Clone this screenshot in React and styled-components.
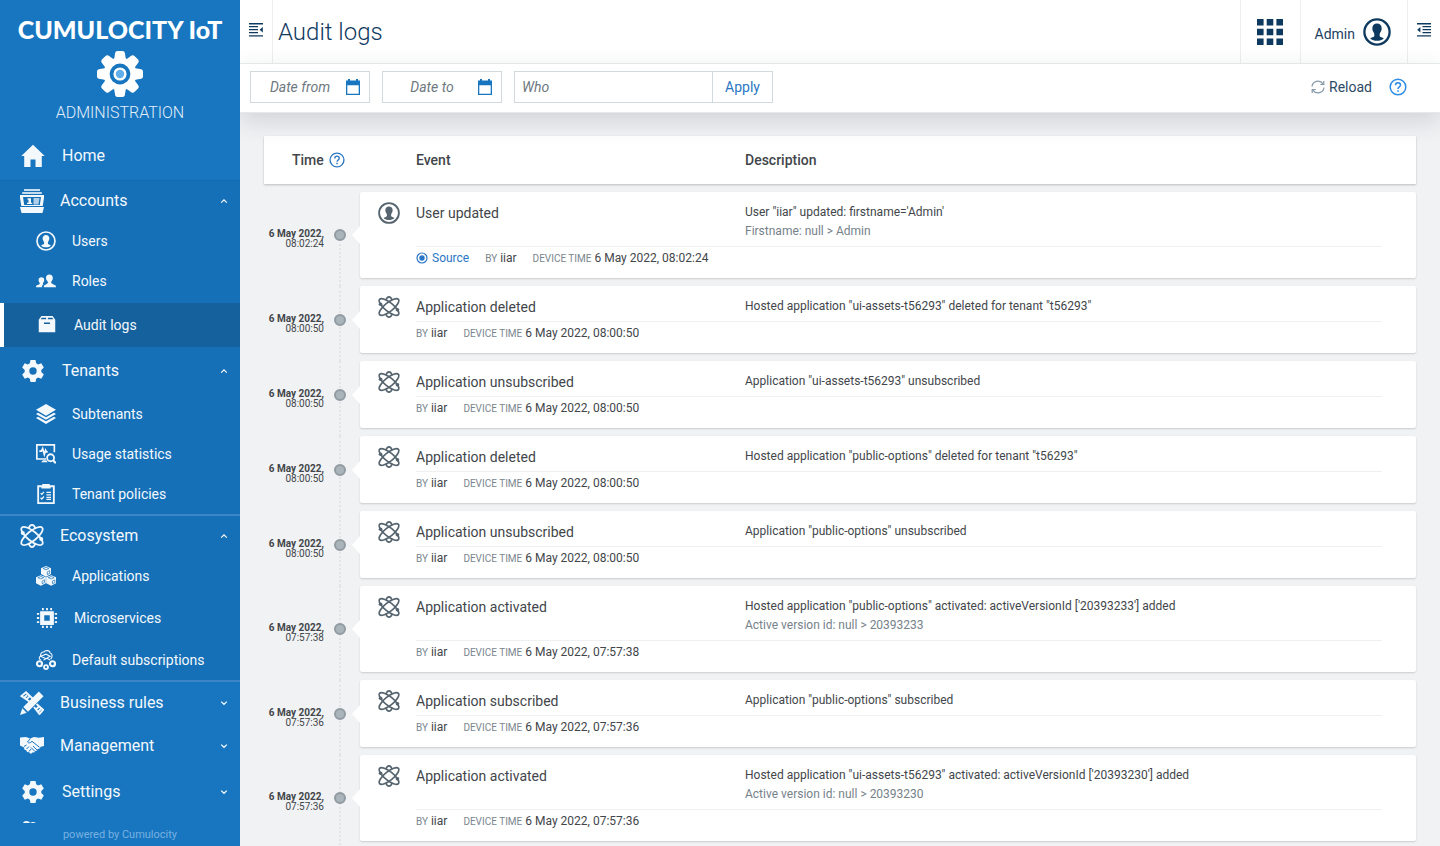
import React from "react";
import styled, { createGlobalStyle } from "styled-components";

const GlobalStyle = createGlobalStyle`
  *, *::before, *::after { box-sizing: border-box; }
  body {
    margin: 0;
    background: #f1f2f4;
    color: #42464a;
    font-family: Roboto, "Liberation Sans", sans-serif;
    font-size: 14px;
    line-height: 20px;
  }
  button, input { font: inherit; color: inherit; }
  button { background: none; border: 0; padding: 0; cursor: pointer; }
  a { color: inherit; text-decoration: none; }
  ul { list-style: none; margin: 0; padding: 0; }
  svg { display: block; flex: none; }
`;

/* ---------- icons ---------- */

const Svg = ({ size = 24, box = 24, children }) => (
  <svg width={size} height={size} viewBox={`0 0 ${box} ${box}`} fill="currentColor" aria-hidden="true">
    {children}
  </svg>
);

const LogoGear = () => (
  <svg width="46" height="46" viewBox="-23 -23 46 46" aria-hidden="true">
    <g fill="#fff">
      {[0, 45, 90, 135].map((a) => (
        <path
          key={a}
          transform={`rotate(${a})`}
          d="M-4.8-21.2Q-4.5-23-2.6-23H2.6Q4.5-23 4.8-21.2L6-14V14L4.8 21.2Q4.5 23 2.6 23H-2.6Q-4.5 23-4.8 21.2L-6 14V-14z"
        />
      ))}
      <circle r="16.5" />
    </g>
    <circle r="10.4" fill="#1776bf" />
    <circle r="6.6" fill="#fff" />
    <circle r="4.2" fill="#62aeea" />
  </svg>
);

const HomeIcon = () => (
  <Svg>
    <path d="M12 .8.3 12h2.9v11h6.3v-7.500h5V23h6.300V12h2.900z" />
  </Svg>
);

const AccountsIcon = () => (
  <Svg>
    <path opacity=".8" d="M4 0h16v2H4zM2.200 3h19.600v2H2.200z" />
    <path fillRule="evenodd" d="M0 6h24v3l-1.300 8H1.300L0 9zm3 2 1.200 8h15.600L21 8z" />
    <path d="M7.500 9.300H11v4.500h1.200V15H7v-1.200h1.500v-3h-1z" />
    <path opacity=".7" d="M13.500 9h6l-1 6.500h-5z" />
    <path d="M0 18h24l-1.500 6h-21z" />
  </Svg>
);

const UserCircleIcon = ({ size }) => (
  <Svg size={size}>
    <circle cx="12" cy="12" r="10.800" fill="none" stroke="currentColor" strokeWidth="2" />
    <path d="M12 4.800c2.400 0 4 1.600 4 4 0 1.400-.3 2.200-.8 3-.5.900-.9 1.400-.9 2.300v1.300c0 .9 2.600 1.100 3.600 2.200-1.600 1.300-3.600 2-5.900 2s-4.300-.7-5.900-2c1-1.100 3.600-1.300 3.600-2.200v-1.300c0-.9-.4-1.400-.9-2.300-.5-.8-.8-1.600-.8-3 0-2.400 1.600-4 4-4z" />
  </Svg>
);

const RolesIcon = () => (
  <Svg size={20}>
    <path d="M16 4.200c2.600 0 4.200 1.600 4.200 4.200 0 2-1 3.200-1.700 4.300-.6 1-.2 2.200.9 2.700l3 1.300c1.100.5 1.600 1.300 1.600 2.800H9.300c0-1.500.4-2.300 1.500-2.800l2.500-1.300c1.100-.5 1.300-1.700.7-2.700-.8-1.100-2-2.300-2-4.300 0-2.600 1.600-4.200 4-4.200z" />
    <path d="M6.500 7.500c2.100 0 3.400 1.300 3.400 3.300 0 1.700-.8 2.500-1.300 3.300-.5.900-.3 1.500.4 1.900-1.300.8-1.900 1.800-2 3.500H0c0-1.200.3-1.900 1.200-2.300l2.300-1c.9-.4 1.300-1.200.8-2.100-.5-.8-1.200-1.600-1.200-3.300 0-2 1.300-3.300 3.400-3.300z" />
  </Svg>
);

const ArchiveIcon = () => (
  <Svg size={18}>
    <path fillRule="evenodd" d="M4.500 0h15L23 5v16.500H1V5zM5 2.200 3.600 4.300h7.200V2.200zm8.200 0v2.100h7.200L19 2.200zM8 8.500v2.200h8V8.500z" />
  </Svg>
);

const CogIcon = () => (
  <Svg>
    <path
      fillRule="evenodd"
      d="M9.500 1h5l.7 3.300 1.900 1.100 3.200-1.100 2.500 4.300-2.500 2.300v2.200l2.500 2.300-2.500 4.300-3.200-1.100-1.900 1.100-.7 3.300h-5l-.7-3.300-1.900-1.100-3.200 1.100-2.500-4.300 2.500-2.300v-2.200L1.200 8.600l2.500-4.300 3.200 1.100 1.900-1.100zM12 8.300a3.700 3.700 0 1 0 0 7.400 3.700 3.700 0 0 0 0-7.400z"
    />
  </Svg>
);

const LayersIcon = () => (
  <Svg size={20}>
    <path d="M12 0 24 7 12 14 0 7zM2.500 10.600 12 16l9.500-5.400L24 12l-12 7L0 12zM2.500 15.400 12 20.800l9.500-5.400L24 16.800 12 24 0 16.800z" />
  </Svg>
);

const StatisticsIcon = () => (
  <Svg size={20}>
    <g fill="none" stroke="currentColor">
      <path strokeWidth="2" d="M12 18H1V1h21v9M4 8.500h2.500l1.500-3 2 7 1.500-5 1 2H14" />
      <circle cx="17.500" cy="16.500" r="4.200" strokeWidth="2.200" />
      <path strokeWidth="2.600" d="m20.500 19.500 3.300 3.500" />
    </g>
    <path d="M8.500 19.500h4L14 22H6z" />
  </Svg>
);

const ClipboardIcon = () => (
  <Svg size={20}>
    <path fillRule="evenodd" d="M1.500 1.500h6V0h9v1.500h6V24h-21zm2.200 2.500v17.800h16.600V4h-2.800v1.500h-11V4z" />
    <path
      fill="none"
      stroke="currentColor"
      strokeWidth="1.500"
      d="m5.500 11 1.500 1.500L9.500 9.500m-4 7L7 18l2.500-3M12.500 10H18m-5.500 3H18m-5.500 3H18m-5.500 2.500H18"
    />
  </Svg>
);

const AtomIcon = ({ size }) => (
  <Svg size={size}>
    <g fill="none" stroke="currentColor" strokeWidth="1.800">
      <ellipse cx="12" cy="12" rx="13.200" ry="4.800" transform="rotate(-39 12 12)" />
      <ellipse cx="12" cy="12" rx="13.200" ry="4.800" transform="rotate(39 12 12)" />
      <path d="M8.700 4.400C9.400 2 10.600.9 12 .9s2.600 1.100 3.300 3.500M8.700 19.600c.7 2.400 1.900 3.500 3.300 3.500s2.600-1.100 3.300-3.500" />
    </g>
    <circle cx="2.800" cy="9" r="2" />
    <circle cx="21.200" cy="15" r="2" />
  </Svg>
);

const Cube = ({ x, y }) => (
  <g transform={`translate(${x} ${y})`}>
    <path d="M6 0 12 2.600v7L6 12.800 0 9.600v-7z" />
    <path fill="none" stroke="#1670b7" strokeWidth=".8" d="M2.500 3 6 4.500 9.500 3 6 1.600zM7.600 7v3.300l2.800-1.500V5.600z" />
  </g>
);

const CubesIcon = () => (
  <Svg size={20}>
    <Cube x={6} y={0} />
    <Cube x={-0.2} y={11} />
    <Cube x={12.2} y={11} />
  </Svg>
);

const ChipIcon = () => (
  <Svg size={22}>
    <path fillRule="evenodd" d="M4.500 4.500h15v15h-15zM9 9v6h6V9z" />
    <path d="M6.500 1h2v2.500h-2zm4.500 0h2v2.500h-2zm4.500 0h2v2.500h-2zm-9 19.500h2V23h-2zm4.500 0h2V23h-2zm4.500 0h2V23h-2zM1 6.500h2.500v2H1zM1 11h2.500v2H1zm0 4.500h2.500v2H1zm19.500-9H23v2h-2.500zm0 4.500H23v2h-2.500zm0 4.500H23v2h-2.500z" />
  </Svg>
);

const SubscriptionsIcon = () => (
  <Svg size={20}>
    <g fill="none" stroke="currentColor">
      <path strokeWidth="1.300" d="M6 12C3.500 11.500 3 8.500 5.500 7.500 5 4.500 7 2 9.500 2.500c1-2.500 7-2.500 7.500 1 3 .5 3 5 .5 7.500M5.500 7.500 12 5l5 2.500-5 3zM9 12l4-2 4 2" />
      <circle cx="4.200" cy="16.500" r="3" strokeWidth="2.600" />
      <circle cx="19.800" cy="16.500" r="3" strokeWidth="2.600" />
      <circle cx="12" cy="20.500" r="2.400" strokeWidth="2.200" />
    </g>
  </Svg>
);

const RulesIcon = () => (
  <Svg>
    <path fill="none" stroke="currentColor" strokeWidth="1.900" d="M9.500 10.500 1.400 5 6 1.300l6.500 6.200M14 16l5.500 7 3.700-4.300L16.500 13M4.500 6.500 7 4m-.3 4.200 2.500-2.500M16.500 18l2.500-2.500m-.7 5 2.500-2.500" />
    <path d="m18.800.5 4.700 4.700L8 20.700l-4.700-4.700zM2.300 17.300 6.700 21.700 0 24z" />
  </Svg>
);

const HandshakeIcon = () => (
  <Svg>
    <path d="M0 3.500 6 3l4 1.500L14 3l5 .7 5-.7v9l-3.200.8-1.500 2-1.700.2-.8 1.700-1.800.2-.8 1.500-2 .1L11 20l-2-1.800-2-.2-.7-1.800-1.800-.5L4 13.500 0 11.500z" />
    <path
      fill="none"
      stroke="#1776bf"
      strokeWidth="1"
      d="M10.500 4.500 7.500 8c1 1.500 3 1 4.500-.7l7.500 6M13 12l4 4m-6-2.500 3.500 3.500M4 12.500 6.500 11M6.500 15l2.500-2.500M9 17.500l2-2.500"
    />
  </Svg>
);

const PeopleIcon = () => (
  <Svg>
    <circle cx="5.500" cy="4" r="4" />
    <circle cx="12" cy="4.500" r="3.500" />
  </Svg>
);

const Chevron = ({ up }) => (
  <Svg size={8} box={8}>
    <path fill="none" stroke="currentColor" strokeWidth="1.300" d={up ? "M1.200 5.600 4 2.900l2.800 2.700" : "M1.200 2.600 4 5.300l2.800-2.700"} />
  </Svg>
);

const PanelIcon = ({ side = "left" }) => (
  <Svg size={14} box={14}>
    {side === "left" ? (
      <path d="M0 0h14v1.400H0zM0 3h9v1.300H0zm0 3h9v1.300H0zm0 3h9v1.300H0zm0 3.200h14v1.400H0zM13.800 4v5.600L10.600 6.800z" />
    ) : (
      <path d="M0 0h14v1.400H0zM5.500 3H14v1.300H5.500zm0 3H14v1.300H5.500zm0 3H14v1.300H5.500zM0 12.200h14v1.400H0zM3.400 4v5.600L.2 6.800z" />
    )}
  </Svg>
);

const GridIcon = () => (
  <Svg size={26} box={26}>
    <path d="M0 0h6.600v6.600H0zM9.700 0h6.600v6.600H9.700zM19.400 0H26v6.600h-6.600zM0 9.700h6.600v6.600H0zM9.700 9.700h6.600v6.600H9.700zM19.400 9.700H26v6.600h-6.600zM0 19.400h6.600V26H0zM9.700 19.400h6.600V26H9.700zM19.400 19.400H26V26h-6.600z" />
  </Svg>
);

const CalendarIcon = () => (
  <Svg size={16} box={16}>
    <path fillRule="evenodd" d="M1 1.500h2V0h2v1.500h6V0h2v1.500h2V16H1zm1.300 4.800v8.400h11.400V6.300z" />
  </Svg>
);

const HelpIcon = ({ size }) => (
  <Svg size={size} box={18}>
    <g fill="none" stroke="currentColor" strokeWidth="1.500">
      <circle cx="9" cy="9" r="7.800" />
      <path d="M6.500 7.200C6.500 5.600 7.600 4.700 9 4.700s2.500.9 2.500 2.300c0 1.900-2.500 2-2.500 4" />
    </g>
    <path d="M8.200 12.200h1.600v1.600H8.200z" />
  </Svg>
);

const ReloadIcon = () => (
  <Svg size={14} box={14}>
    <g fill="none" stroke="currentColor" strokeWidth="1.200">
      <path d="M1 6.500a6 6 0 0 1 11-2.600M13 7.500a6 6 0 0 1-11 2.600" />
      <path d="M12.800 1v3.500H9.300M1.200 13V9.500h3.500" />
    </g>
  </Svg>
);

const SourceIcon = () => (
  <Svg size={12} box={12}>
    <circle cx="6" cy="6" r="5" fill="none" stroke="currentColor" strokeWidth="1.200" />
    <circle cx="6" cy="6" r="2.700" />
  </Svg>
);

/* ---------- layout ---------- */

const Shell = styled.div`
  display: grid;
  grid-template-columns: 240px minmax(0, 1fr);
  height: 100vh;
  overflow: hidden;
`;

const Sidebar = styled.aside`
  position: relative;
  z-index: 1;
  display: flex;
  flex-direction: column;
  min-height: 0;
  background: #1776bf;
  color: #f3f8fd;
`;

const Brand = styled.header`
  display: flex;
  flex-direction: column;
  align-items: center;
  padding: 14px 0 9px;
`;

const BrandName = styled.div`
  margin-bottom: 7px;
  color: #fff;
  font: 900 25px/30px Lato, sans-serif;
  white-space: nowrap;
`;

const BrandApp = styled.div`
  margin-top: 6px;
  color: #e3eefa;
  font-size: 16px;
  font-weight: 300;
`;

const Nav = styled.nav`
  flex: 1;
  min-height: 0;
  overflow: hidden;
`;

const NavGroup = styled.div`
  background: ${(p) => (p.$open ? "#1670b7" : "transparent")};
  border-top: ${(p) => (p.$first ? "1px solid #166cb0" : "0")};
  border-bottom: ${(p) => (p.$divided ? "2px solid #3c85c8" : "0")};
`;

const navHeights = { home: 48, top: 40, topWide: 47, topMid: 42, topTall: 44, topLast: 48, clipped: 34 };

const NavTop = styled.button`
  display: flex;
  align-items: center;
  gap: 16px;
  width: 100%;
  height: ${(p) => navHeights[p.$kind]}px;
  padding: 0 12px 0 20px;
  font-size: 16px;
  text-align: left;
`;

const TopIcon = styled.span`
  display: flex;
  justify-content: center;
  width: ${(p) => (p.$wide ? 26 : 24)}px;
`;

const TopLabel = styled.span`
  flex: 1;
`;

const NavSub = styled.a`
  display: flex;
  align-items: center;
  gap: 16px;
  height: ${(p) => (p.$wide ? 44 : 40)}px;
  margin: ${(p) => (p.$active ? "2px 0 0" : "0")};
  padding-left: 36px;
  background: ${(p) => (p.$active ? "#15619e" : "transparent")};
  box-shadow: ${(p) => (p.$active ? "inset 4px 0 #fff" : "none")};
`;

const SubIcon = styled.span`
  display: flex;
  justify-content: center;
  width: ${(p) => (p.$wide ? 22 : 20)}px;
`;

const Powered = styled.footer`
  height: 23px;
  color: #78b1e2;
  font-size: 11px;
  line-height: 24px;
  text-align: center;
`;

const Main = styled.main`
  display: flex;
  flex-direction: column;
  min-width: 0;
  min-height: 0;
`;

const TopBar = styled.header`
  display: flex;
  flex: none;
  height: 64px;
  background: #fff;
  border-bottom: 1px solid #eceeef;
  color: #0f3a5f;
`;

const PanelToggle = styled.button`
  display: flex;
  justify-content: center;
  width: 33px;
  padding-top: 23px;
  border: 0 solid #eceeef;
  border-width: ${(p) => (p.$right ? "0 0 0 1px" : "0 1px 0 0")};
`;

const Title = styled.h1`
  flex: 1;
  margin: 0;
  padding-left: 5px;
  font-size: 24px;
  font-weight: 300;
  line-height: 64px;
`;

const TopButton = styled.button`
  display: flex;
  align-items: center;
  gap: 8px;
  padding: ${(p) => (p.$apps ? "0 17px 0 16px" : "0 16px 0 14px")};
  border-left: 1px solid #eceeef;
`;

const UserName = styled.span`
  padding-top: 4px;
  color: #1d4162;
`;

const FilterBar = styled.form`
  position: relative;
  display: flex;
  flex: none;
  align-items: center;
  gap: 12px;
  height: 49px;
  padding: 0 33px 2px 10px;
  background: #fff;
  border-bottom: 1px solid #e6e8e9;
  box-shadow: 0 8px 24px rgba(40, 48, 56, 0.16);
`;

const Field = styled.div`
  display: flex;
  align-items: center;
  width: ${(p) => (p.$search ? 259 : 120)}px;
  height: 32px;
  padding-right: ${(p) => (p.$search ? 0 : 8)}px;
  border: 1px solid #d3dade;
  color: #1776bf;
`;

const TextInput = styled.input`
  flex: 1;
  min-width: 0;
  height: 30px;
  padding: ${(p) => (p.$center ? "0 0 0 4px" : "0 7px")};
  border: 0;
  outline: 0;
  background: none;
  color: #3a3f44;
  text-align: ${(p) => (p.$center ? "center" : "left")};
  &::placeholder {
    color: #6d787f;
    font-style: italic;
    opacity: 1;
  }
`;

const ApplyButton = styled.button`
  width: 60px;
  height: 30px;
  border-left: 1px solid #d3dade;
  color: #2a76c4;
`;

const ReloadButton = styled.button`
  display: flex;
  align-items: center;
  gap: 4px;
  margin-left: auto;
  color: #2d4a66;
  svg { color: #8499a8; }
`;

const HelpButton = styled.button`
  margin-left: ${(p) => (p.$bar ? 5 : 0)}px;
  color: ${(p) => (p.$bar ? "#2c8ce6" : "#2a76c4")};
`;

const Content = styled.div`
  flex: 1;
  min-height: 0;
  padding: 23px 24px 0;
  overflow: hidden;
`;

const LogTable = styled.table`
  display: block;
  width: 100%;
`;

const LogHead = styled.thead`
  display: block;
  background: #fff;
  box-shadow: 0 1px 2px rgba(0, 0, 0, 0.22);
`;

const HeadRow = styled.tr`
  display: grid;
  grid-template-columns: 152px 329px minmax(0, 1fr);
  align-items: center;
  height: 48px;
`;

const HeadCell = styled.th`
  display: flex;
  align-items: center;
  gap: 5px;
  padding: 0 0 0 ${(p) => (p.$time ? 28 : 0)}px;
  font-weight: 500;
`;

const LogBody = styled.tbody`
  display: flex;
  flex-direction: column;
  padding-top: 8px;
`;

const LogRow = styled.tr`
  position: relative;
  display: grid;
  grid-template-columns: 96px minmax(0, 1fr);
  padding-bottom: 8px;
  &::before {
    content: "";
    position: absolute;
    top: 0;
    bottom: 0;
    left: 75px;
    border-left: 2px dotted #e2e4e6;
  }
  &:first-child::before { top: 50%; }
`;

const TimeCell = styled.td`
  display: flex;
  align-items: center;
  gap: 10px;
  padding: 0;
`;

const Stamp = styled.time`
  width: 60px;
  padding-top: 8px;
  font-size: 10px;
  line-height: 10px;
  text-align: right;
  white-space: nowrap;
`;

const StampDate = styled.span`
  display: block;
  font-weight: 700;
`;

const Dot = styled.span`
  position: relative;
  width: 12px;
  height: 12px;
  border: 2px solid #919ba1;
  border-radius: 50%;
  background: #a9b4bb;
`;

const CardCell = styled.td`
  position: relative;
  padding: 0 34px 0 18px;
  background: #fff;
  border-radius: 2px;
  box-shadow: 0 1px 2px rgba(0, 0, 0, 0.16);
  &::before {
    content: "";
    position: absolute;
    top: calc(50% - 9px);
    left: -8px;
    border: solid transparent;
    border-width: 9px 8px 9px 0;
    border-right-color: #fff;
  }
`;

const Card = styled.div`
  display: grid;
  grid-template-columns: 38px minmax(0, 1fr);
`;

const CardIcon = styled.span`
  padding-top: 10px;
  color: #55646e;
`;

const Summary = styled.div`
  display: grid;
  grid-template-columns: 329px minmax(0, 1fr);
  padding: 11px 0 5px;
  border-bottom: 1px solid #eef0f1;
  line-height: 19px;
`;

const EventName = styled.span`
  height: 19px;
  padding-top: 1px;
`;

const Description = styled.div`
  font-size: 12px;
`;

const Change = styled.div`
  color: #76828a;
`;

const Meta = styled.div`
  display: flex;
  grid-column: 2;
  gap: 16px;
  height: 31px;
  font-size: 12px;
  line-height: 22px;
`;

const MetaLabel = styled.span`
  color: #7a868e;
  font-size: 10px;
`;

const SourceLink = styled.a`
  display: flex;
  align-items: center;
  gap: 4px;
  height: 22px;
  color: #2a76c4;
`;

/* ---------- data ---------- */

const navigation = [
  { label: "Home", icon: HomeIcon, kind: "home", wide: true },
  {
    label: "Accounts",
    icon: AccountsIcon,
    kind: "top",
    first: true,
    items: [
      { label: "Users", icon: UserCircleIcon },
      { label: "Roles", icon: RolesIcon },
      { label: "Audit logs", icon: ArchiveIcon, wide: true, active: true },
    ],
  },
  {
    label: "Tenants",
    icon: CogIcon,
    kind: "topWide",
    wide: true,
    divided: true,
    items: [
      { label: "Subtenants", icon: LayersIcon },
      { label: "Usage statistics", icon: StatisticsIcon },
      { label: "Tenant policies", icon: ClipboardIcon },
    ],
  },
  {
    label: "Ecosystem",
    icon: AtomIcon,
    kind: "top",
    divided: true,
    items: [
      { label: "Applications", icon: CubesIcon },
      { label: "Microservices", icon: ChipIcon, wide: true },
      { label: "Default subscriptions", icon: SubscriptionsIcon },
    ],
  },
  { label: "Business rules", icon: RulesIcon, kind: "topMid", closed: true },
  { label: "Management", icon: HandshakeIcon, kind: "topTall", closed: true },
  { label: "Settings", icon: CogIcon, kind: "topLast", wide: true, closed: true },
];

const DATE = "6 May 2022";

const logs = [
  { time: "08:02:24", event: "User updated", text: `User "iiar" updated: firstname='Admin'`, change: "Firstname: null > Admin", user: true },
  { time: "08:00:50", event: "Application deleted", text: `Hosted application "ui-assets-t56293" deleted for tenant "t56293"` },
  { time: "08:00:50", event: "Application unsubscribed", text: `Application "ui-assets-t56293" unsubscribed` },
  { time: "08:00:50", event: "Application deleted", text: `Hosted application "public-options" deleted for tenant "t56293"` },
  { time: "08:00:50", event: "Application unsubscribed", text: `Application "public-options" unsubscribed` },
  {
    time: "07:57:38",
    event: "Application activated",
    text: `Hosted application "public-options" activated: activeVersionId ['20393233'] added`,
    change: "Active version id: null > 20393233",
  },
  { time: "07:57:36", event: "Application subscribed", text: `Application "public-options" subscribed` },
  {
    time: "07:57:36",
    event: "Application activated",
    text: `Hosted application "ui-assets-t56293" activated: activeVersionId ['20393230'] added`,
    change: "Active version id: null > 20393230",
  },
];

/* ---------- parts ---------- */

function NavSection({ label, icon: Icon, kind, wide, first, divided, closed, items }) {
  return (
    <NavGroup $open={Boolean(items)} $first={first} $divided={divided}>
      <NavTop type="button" $kind={kind} aria-expanded={items ? true : closed ? false : undefined}>
        <TopIcon $wide={wide}>
          <Icon />
        </TopIcon>
        <TopLabel>{label}</TopLabel>
        {(items || closed) && <Chevron up={Boolean(items)} />}
      </NavTop>
      {items && (
        <ul>
          {items.map(({ label: name, icon: ItemIcon, wide: wideItem, active }) => (
            <li key={name}>
              <NavSub href="#" $wide={wideItem} $active={active} aria-current={active ? "page" : undefined}>
                <SubIcon $wide={wideItem}>
                  <ItemIcon size={20} />
                </SubIcon>
                {name}
              </NavSub>
            </li>
          ))}
        </ul>
      )}
    </NavGroup>
  );
}

function DateField({ label }) {
  return (
    <Field>
      <TextInput $center placeholder={label} aria-label={label} />
      <button type="button" aria-label={`Pick ${label.toLowerCase()}`}>
        <CalendarIcon />
      </button>
    </Field>
  );
}

function LogEntry({ time, event, text, change, user }) {
  return (
    <LogRow>
      <TimeCell>
        <Stamp>
          <StampDate>{DATE},</StampDate>
          {time}
        </Stamp>
        <Dot />
      </TimeCell>
      <CardCell colSpan={2}>
        <Card>
          <CardIcon>{user ? <UserCircleIcon size={22} /> : <AtomIcon size={22} />}</CardIcon>
          <Summary>
            <EventName>{event}</EventName>
            <Description>
              {text}
              {change && <Change>{change}</Change>}
            </Description>
          </Summary>
          <Meta>
            {user && (
              <SourceLink href="#">
                <SourceIcon />
                Source
              </SourceLink>
            )}
            <span>
              <MetaLabel>BY</MetaLabel> iiar
            </span>
            <span>
              <MetaLabel>DEVICE TIME</MetaLabel> {DATE}, {time}
            </span>
          </Meta>
        </Card>
      </CardCell>
    </LogRow>
  );
}

export default function App() {
  return (
    <>
      <GlobalStyle />
      <Shell>
        <Sidebar>
          <Brand>
            <BrandName>CUMULOCITY IoT</BrandName>
            <LogoGear />
            <BrandApp>ADMINISTRATION</BrandApp>
          </Brand>
          <Nav>
            {navigation.map((section) => (
              <NavSection key={section.label} {...section} />
            ))}
            <NavTop type="button" $kind="clipped" aria-label="More">
              <TopIcon $wide>
                <PeopleIcon />
              </TopIcon>
            </NavTop>
          </Nav>
          <Powered>powered by Cumulocity</Powered>
        </Sidebar>
        <Main>
          <TopBar>
            <PanelToggle type="button" aria-label="Toggle navigation">
              <PanelIcon />
            </PanelToggle>
            <Title>Audit logs</Title>
            <TopButton type="button" $apps aria-label="Applications">
              <GridIcon />
            </TopButton>
            <TopButton type="button">
              <UserName>Admin</UserName>
              <UserCircleIcon size={28} />
            </TopButton>
            <PanelToggle type="button" $right aria-label="Toggle side panel">
              <PanelIcon side="right" />
            </PanelToggle>
          </TopBar>
          <FilterBar onSubmit={(e) => e.preventDefault()}>
            <DateField label="Date from" />
            <DateField label="Date to" />
            <Field $search>
              <TextInput placeholder="Who" aria-label="Who" />
              <ApplyButton type="submit">Apply</ApplyButton>
            </Field>
            <ReloadButton type="button">
              <ReloadIcon />
              Reload
            </ReloadButton>
            <HelpButton type="button" $bar aria-label="Help">
              <HelpIcon size={18} />
            </HelpButton>
          </FilterBar>
          <Content>
            <LogTable>
              <LogHead>
                <HeadRow>
                  <HeadCell $time>
                    Time
                    <HelpButton type="button" aria-label="About time">
                      <HelpIcon size={16} />
                    </HelpButton>
                  </HeadCell>
                  <HeadCell>Event</HeadCell>
                  <HeadCell>Description</HeadCell>
                </HeadRow>
              </LogHead>
              <LogBody>
                {logs.map((log, i) => (
                  <LogEntry key={i} {...log} />
                ))}
              </LogBody>
            </LogTable>
          </Content>
        </Main>
      </Shell>
    </>
  );
}
